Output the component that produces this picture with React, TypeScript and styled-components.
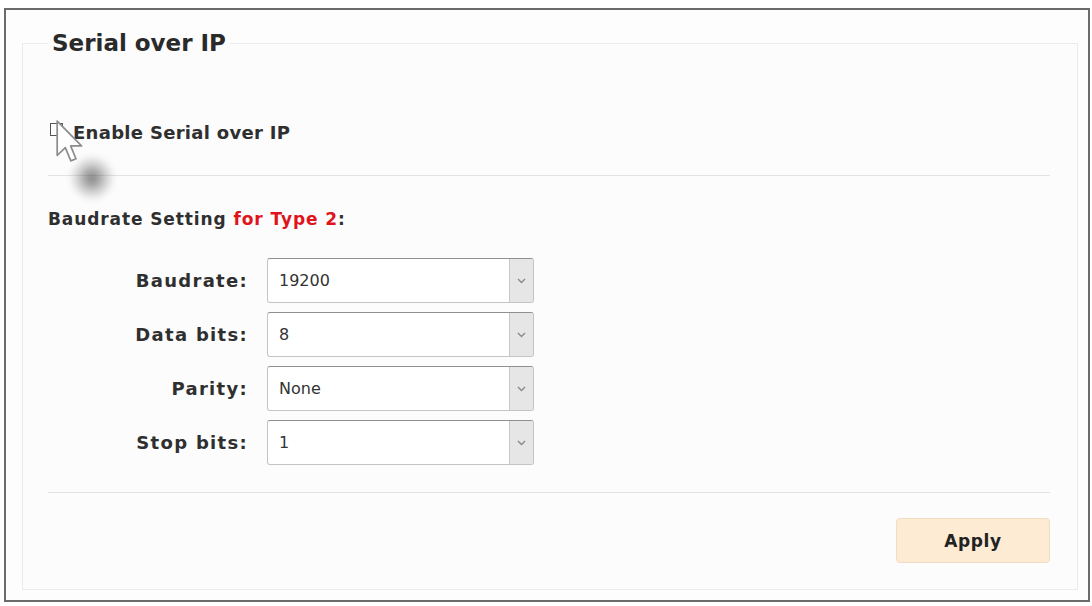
import React, {useState} from "react";
import styled, {createGlobalStyle} from "styled-components";

const GlobalStyle = createGlobalStyle`
  html, body {
    margin: 0;
    padding: 0;
    background: #ffffff;
    font-family: "DejaVu Sans", Verdana, sans-serif;
    color: #2b2b2b;
  }
`

const Frame = styled.div`
  position: relative;
  box-sizing: border-box;
  width: 1086px;
  height: 594px;
  margin: 8px 0 0 4px;
  padding: 19px 10px 10px 16px;
  border: 2px solid #6b6b6b;
  background: #fdfdfd;
`

const Panel = styled.fieldset`
  box-sizing: border-box;
  height: 100%;
  margin: 0;
  padding: 0 27px 0 25px;
  border: 1px solid #ebebeb;
  background: #fcfcfc;
  display: flex;
  flex-direction: column;
`

const Legend = styled.legend`
  padding: 0 4px;
  font-size: 23px;
  font-weight: bold;
  line-height: 28px;
  color: #2a2a2a;
`

const CheckRow = styled.label`
  display: flex;
  align-items: center;
  gap: 10px;
  margin-top: 65px;
  font-size: 18px;
  font-weight: bold;
  letter-spacing: 0.3px;
  line-height: 21px;
  color: #2f2f2f;
`

const Box = styled.span<{checked: boolean}>`
  box-sizing: border-box;
  width: 13px;
  height: 13px;
  margin-left: 2px;
  margin-top: -6px;
  border: 1px solid #555;
  background: ${p => p.checked ? '#2f6fd0' : '#fff'};
`

const Divider = styled.hr<{gap?: number}>`
  width: 100%;
  margin: ${p => p.gap ?? 0}px 0 0;
  border: none;
  border-top: 1px solid #e2e2e2;
`

const SectionTitle = styled.div`
  margin: 33px 0 0;
  font-size: 17px;
  font-weight: bold;
  letter-spacing: 0.9px;
  line-height: 20px;
  color: #2f2f2f;
`

const Red = styled.span`
  color: #e0141b;
`

const Rows = styled.div`
  display: flex;
  flex-direction: column;
  gap: 9px;
  margin: 29px 0 27px;
`

const Row = styled.div`
  display: flex;
  align-items: center;
  gap: 19px;
`

const Label = styled.div`
  width: 200px;
  text-align: right;
  font-size: 18px;
  font-weight: bold;
  letter-spacing: 1.3px;
  color: #2f2f2f;
`

const SelectBox = styled.div`
  box-sizing: border-box;
  width: 267px;
  height: 45px;
  display: flex;
  border: 1px solid #c4c4c4;
  border-top-color: #8f8f8f;
  border-radius: 3px;
  background: #fff;
  overflow: hidden;
`

const SelectValue = styled.div`
  flex: 1;
  display: flex;
  align-items: center;
  padding-left: 11px;
  font-size: 16px;
  color: #333;
`

const Arrow = styled.div`
  width: 23px;
  display: flex;
  align-items: center;
  justify-content: center;
  background: #e6e6e6;
  border-left: 1px solid #c8c8c8;
`

const Footer = styled.div`
  display: flex;
  justify-content: flex-end;
  margin-top: 25px;
`

const ApplyButton = styled.button`
  width: 154px;
  height: 45px;
  border: 1px solid #f1dcc1;
  border-radius: 4px;
  background: #fdebd4;
  font-family: "DejaVu Sans", Verdana, sans-serif;
  font-size: 17px;
  font-weight: bold;
  letter-spacing: 0.6px;
  color: #222;
  cursor: pointer;
`

const Pointer = styled.svg`
  position: absolute;
  left: 49px;
  top: 109px;
`

const Smudge = styled.div`
  position: absolute;
  left: 63px;
  top: 145px;
  width: 46px;
  height: 46px;
  border-radius: 50%;
  background: radial-gradient(circle, rgba(70, 70, 70, 0.7) 0%, rgba(120, 120, 120, 0.35) 42%, rgba(255, 255, 255, 0) 70%);
  filter: blur(3px);
`

const settings = [
    {label: 'Baudrate:', value: '19200'},
    {label: 'Data bits:', value: '8'},
    {label: 'Parity:', value: 'None'},
    {label: 'Stop bits:', value: '1'},
]

function Chevron() {
    return (
        <svg width="9" height="6" viewBox="0 0 9 6">
            <path d="M1 1 L4.5 4.5 L8 1" fill="none" stroke="#8a8a8a" strokeWidth="1.4"/>
        </svg>
    )
}

export default function App() {
    const [enabled, setEnabled] = useState(false)

    return (
        <>
            <GlobalStyle/>
            <Frame>
                <Panel>
                    <Legend>Serial over IP</Legend>
                    <CheckRow onClick={() => setEnabled(!enabled)}>
                        <Box checked={enabled}/>
                        Enable Serial over IP
                    </CheckRow>
                    <Divider gap={32}/>
                    <SectionTitle>
                        Baudrate Setting <Red>for Type 2</Red>:
                    </SectionTitle>
                    <Rows>
                        {settings.map(s => (
                            <Row key={s.label}>
                                <Label>{s.label}</Label>
                                <SelectBox>
                                    <SelectValue>{s.value}</SelectValue>
                                    <Arrow><Chevron/></Arrow>
                                </SelectBox>
                            </Row>
                        ))}
                    </Rows>
                    <Divider/>
                    <Footer>
                        <ApplyButton>Apply</ApplyButton>
                    </Footer>
                </Panel>
                <Smudge/>
                <Pointer width="30" height="47" viewBox="0 0 14 22">
                    <path d="M1 1 L1 17 L4.8 13.4 L7.4 19.6 L9.8 18.6 L7.3 12.6 L12.4 12.6 Z"
                          fill="#fff" stroke="#8c8c8c" strokeWidth="0.8" strokeLinejoin="round"/>
                </Pointer>
            </Frame>
        </>
    );
}
